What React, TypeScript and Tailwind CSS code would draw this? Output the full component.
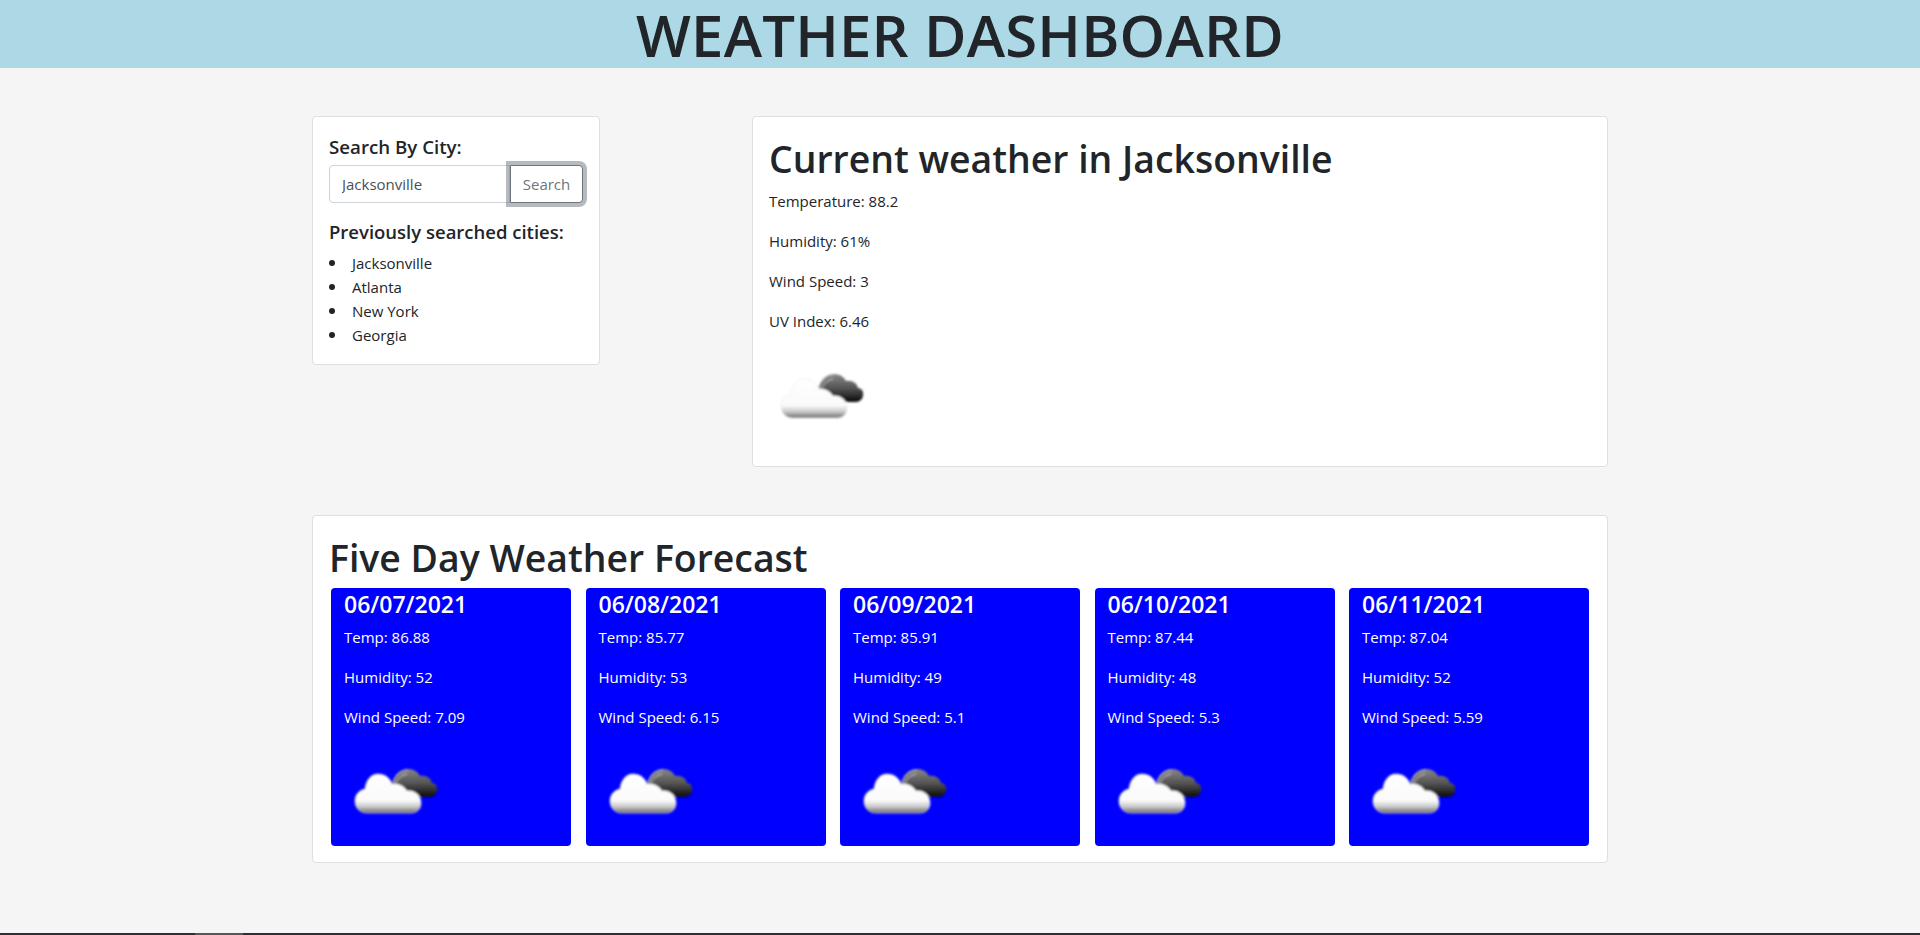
const FONT = "font-['Open_Sans','Noto_Sans',sans-serif]";

function Cloud({ id }: { id: string }) {
  return (
    <svg viewBox="0 0 100 100" className="block h-[100px] w-[100px]">
      <defs>
        <linearGradient id={`${id}w`} x1="0" y1="0" x2="0" y2="1">
          <stop offset="0" stopColor="#ffffff" />
          <stop offset="0.68" stopColor="#fafafa" />
          <stop offset="0.84" stopColor="#c8c8c8" />
          <stop offset="1" stopColor="#6a6a6a" />
        </linearGradient>
        <linearGradient id={`${id}d`} x1="0" y1="0" x2="0" y2="1">
          <stop offset="0" stopColor="#888888" />
          <stop offset="0.5" stopColor="#555555" />
          <stop offset="1" stopColor="#0a0a0a" />
        </linearGradient>
        <filter id={`${id}b`} x="-10%" y="-10%" width="120%" height="120%">
          <feGaussianBlur stdDeviation="1" />
        </filter>
      </defs>
      <g filter={`url(#${id}b)`}>
        <path
          d="M50 38C52 29 58 24 65 24C71 24 75 27 77 31C83 30 88 33 89 38C93 38 95 42 94 46C93 50 90 52 86 52L62 52C58 48 54 42 50 38Z"
          fill={`url(#${id}d)`}
        />
        <path d="M50 38C52 30 58 25 65 25" fill="none" stroke="#a8a8a8" strokeWidth="1.6" />
        <path d="M53 38C55 33 59 30 64 29" fill="none" stroke="#c8c8c8" strokeWidth="1" />
        <path
          d="M24 68C16 68 12 62 12 56C12 50 16 45 22 44C23 35 28 29 35 29C42 29 47 33 49 39C55 38 61 41 64 46C71 45 78 50 78 58C78 64 74 68 68 68Z"
          fill={`url(#${id}w)`}
          stroke="#e8e8e8"
          strokeWidth="0.6"
        />
      </g>
    </svg>
  );
}

const days = [
  { date: "06/07/2021", temp: "86.88", hum: "52", wind: "7.09" },
  { date: "06/08/2021", temp: "85.77", hum: "53", wind: "6.15" },
  { date: "06/09/2021", temp: "85.91", hum: "49", wind: "5.1" },
  { date: "06/10/2021", temp: "87.44", hum: "48", wind: "5.3" },
  { date: "06/11/2021", temp: "87.04", hum: "52", wind: "5.59" },
];

const cities = ["Jacksonville", "Atlanta", "New York", "Georgia"];

export default function App() {
  return (
    <div className={`${FONT} flex h-[935px] flex-col overflow-hidden bg-[#f5f5f5] text-[15px] leading-6 text-[#212529]`}>
      <header className="h-[68px] bg-[#add8e6] pt-[2px] text-center">
        <h1 className="text-[58px] leading-[66px] font-semibold tracking-[0.2px]">WEATHER DASHBOARD</h1>
      </header>

      <main className="mx-auto mt-12 flex w-[1296px] flex-1 flex-col gap-12">
        <div className="flex items-start justify-between">
          <section className="w-[288px] rounded border border-[#dfdfdf] bg-white px-4 pt-4 pb-[17px]">
            <h5 className="pt-[3px] text-[18.7px] leading-[21px] font-semibold">Search By City:</h5>
            <div className="mt-2 flex h-[38px] w-[254px]">
              <input
                readOnly
                value="Jacksonville"
                className="h-[38px] w-[181px] rounded-l border border-[#ced4da] bg-white px-3 text-[15px] text-[#495057] outline-none"
              />
              <button className="h-[38px] w-[73px] rounded-r border border-[#6c757d] bg-white text-[15px] text-[#6c757d] shadow-[0_0_0_4px_rgba(108,117,125,0.5)]">
                Search
              </button>
            </div>
            <h5 className="mt-4 pt-[2px] text-[18.5px] leading-[22px] font-semibold">Previously searched cities:</h5>
            <ul className="mt-2">
              {cities.map((c) => (
                <li key={c} className="flex items-center">
                  <span className="mr-[17px] h-[6px] w-[6px] rounded-full bg-[#212529]" />
                  {c}
                </li>
              ))}
            </ul>
          </section>

          <section className="w-[856px] rounded border border-[#dfdfdf] bg-white p-4">
            <h2 className="pt-[3px] text-[37.4px] leading-[45px] font-semibold">Current weather in Jacksonville</h2>
            <p className="mt-2">Temperature: 88.2</p>
            <p className="mt-4">Humidity: 61%</p>
            <p className="mt-4">Wind Speed: 3</p>
            <p className="mt-4">UV Index: 6.46</p>
            <div className="mt-[17px]">
              <Cloud id="main" />
            </div>
          </section>
        </div>

        <section className="rounded border border-[#dfdfdf] bg-white p-4">
          <h2 className="pt-[3px] text-[37.4px] leading-[45px] font-semibold">Five Day Weather Forecast</h2>
          <div className="mt-2 flex justify-between px-[2px]">
            {days.map((d, i) => (
              <article key={d.date} className="h-[258px] w-[240px] rounded bg-[#0000ff] px-[13px] text-white">
                <h4 className="pt-1 text-[23px] leading-[25px] font-semibold">{d.date}</h4>
                <p className="mt-2">Temp: {d.temp}</p>
                <p className="mt-4">Humidity: {d.hum}</p>
                <p className="mt-4">Wind Speed: {d.wind}</p>
                <div className="mt-4 -ml-px">
                  <Cloud id={`day${i}`} />
                </div>
              </article>
            ))}
          </div>
        </section>
      </main>

      <div className="flex h-[2px] bg-[#2c2f33]">
        <div className="w-[195px]" />
        <div className="w-[48px] bg-[#55585a]" />
      </div>
    </div>
  );
}
